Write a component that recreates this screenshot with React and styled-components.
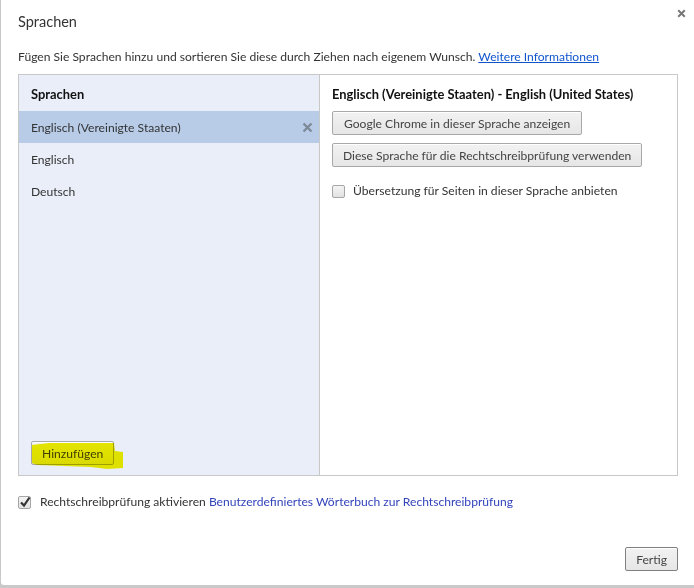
import React from "react";
import styled, { createGlobalStyle } from "styled-components";

const Global = createGlobalStyle`
  html, body { margin: 0; padding: 0; background: #c9c9c9; }
  body { width: 694px; height: 588px; overflow: hidden; font-family: Lato, "Noto Sans", sans-serif; font-size: 12.1px; color: #333; }
  #root { width: 694px; height: 588px; }
`;

const Dialog = styled.div`
  position: relative;
  box-sizing: border-box;
  width: 693px;
  height: 585px;
  margin-left: 1px;
  background: #fff;
  border-radius: 0 0 0 3px;
  padding: 13px 16px 0 17px;
  display: flex;
  flex-direction: column;
`;

const Title = styled.h1`
  margin: 0;
  font-size: 14.5px;
  line-height: 17px;
  font-weight: 400;
  color: #333;
`;

const Close = styled.svg`
  position: absolute;
  top: 9px;
  right: 8px;
  width: 9px;
  height: 9px;
`;

const Description = styled.p`
  margin: 19px 0 9px;
  line-height: 16px;
  white-space: nowrap;
`;

const Link = styled.a`
  color: ${(p) => (p.$plain ? "#3344bb" : "#1155cc")};
  text-decoration: ${(p) => (p.$plain ? "none" : "underline")};
`;

const Panel = styled.div`
  box-sizing: border-box;
  width: 660px;
  height: 402px;
  border: 1px solid #c8c8c8;
  display: grid;
  grid-template-columns: 301px 1fr;
`;

const LeftColumn = styled.div`
  box-sizing: border-box;
  background: #eaeef8;
  border-right: 1px solid #c8c8c8;
  display: flex;
  flex-direction: column;
  position: relative;
`;

const ColumnHeading = styled.div`
  font-weight: 700;
  font-size: 12.9px;
  color: #111;
  line-height: 16px;
  padding: 11px 12px 9px;
`;

const LanguageRow = styled.div`
  height: 32px;
  padding: 0 12px;
  display: flex;
  align-items: center;
  justify-content: space-between;
  background: ${(p) => (p.$selected ? "#b8cce8" : "transparent")};
`;

const RemoveIcon = styled.svg`
  width: 11px;
  height: 11px;
  margin-right: -6px;
`;

const Footer = styled.div`
  margin-top: auto;
  padding: 0 12px 10px;
  position: relative;
`;

const Button = styled.button`
  box-sizing: border-box;
  height: 24px;
  padding: 0 ${(p) => p.$pad}px;
  border: 1px solid ${(p) => (p.$dark ? "#808080" : "#a8a8a8")};
  border-radius: 2px;
  background: linear-gradient(#f2f2f2, #e6e6e6);
  box-shadow: inset 0 1px 0 #fff;
  font: inherit;
  color: #444;
  white-space: nowrap;
  display: block;
  position: relative;
`;

const Marker = styled.svg`
  position: absolute;
  left: 12px;
  top: 0;
  width: 96px;
  height: 30px;
  mix-blend-mode: multiply;
  pointer-events: none;
`;

const Detail = styled.div`
  padding: 0 12px;
  display: flex;
  flex-direction: column;
  align-items: flex-start;
`;

const DetailHeading = styled(ColumnHeading)`
  padding: 11px 0 9px;
  white-space: nowrap;
`;

const ButtonStack = styled.div`
  display: flex;
  flex-direction: column;
  align-items: flex-start;
  gap: 8px;
`;

const CheckRow = styled.label`
  display: flex;
  align-items: center;
  gap: ${(p) => p.$gap}px;
  line-height: 16px;
  white-space: nowrap;
  margin-top: ${(p) => p.$top}px;
`;

const Box = styled.span`
  box-sizing: border-box;
  width: 13px;
  height: 13px;
  border: 1px solid #a6a6a6;
  border-radius: 2px;
  background: linear-gradient(#f4f4f4, #e2e2e2);
  position: relative;
  flex: none;
`;

const Tick = styled.svg`
  position: absolute;
  left: 0;
  top: -1px;
  width: 12px;
  height: 12px;
`;

const Actions = styled.div`
  margin-top: auto;
  padding: 0 0 14px;
  display: flex;
  justify-content: flex-end;
`;

const Cross = ({ c, w }) => (
  <path d="M1.5 1.5 L9.5 9.5 M9.5 1.5 L1.5 9.5" stroke={c} strokeWidth={w} fill="none" />
);

export default function App() {
  return (
    <>
      <Global />
      <Dialog>
        <Title>Sprachen</Title>
        <Close viewBox="0 0 11 11"><Cross c="#777" w="2.4" /></Close>
        <Description>
          Fügen Sie Sprachen hinzu und sortieren Sie diese durch Ziehen nach eigenem Wunsch. <Link href="#">Weitere Informationen</Link>
        </Description>
        <Panel>
          <LeftColumn>
            <ColumnHeading>Sprachen</ColumnHeading>
            <LanguageRow $selected>
              Englisch (Vereinigte Staaten)
              <RemoveIcon viewBox="0 0 11 11"><Cross c="#7f8a99" w="2.4" /></RemoveIcon>
            </LanguageRow>
            <LanguageRow>Englisch</LanguageRow>
            <LanguageRow>Deutsch</LanguageRow>
            <Footer>
              <Button $pad={10}>Hinzufügen</Button>
              <Marker viewBox="0 0 96 30">
                <path d="M1 4 L18 2 L83 2 L84 10 L92 11 L92 27 L76 28 L60 26 L6 24 L1 22 Z" fill="#f2f200" />
              </Marker>
            </Footer>
          </LeftColumn>
          <Detail>
            <DetailHeading>Englisch (Vereinigte Staaten) - English (United States)</DetailHeading>
            <ButtonStack>
              <Button $pad={11}>Google Chrome in dieser Sprache anzeigen</Button>
              <Button $pad={10}>Diese Sprache für die Rechtschreibprüfung verwenden</Button>
            </ButtonStack>
            <CheckRow $top={16} $gap={8}>
              <Box />
              Übersetzung für Seiten in dieser Sprache anbieten
            </CheckRow>
          </Detail>
        </Panel>
        <CheckRow $top={18} $gap={9}>
          <Box>
            <Tick viewBox="0 0 12 12"><path d="M2 6.5 L5 9.5 L10.5 1.5" stroke="#333" strokeWidth="2.2" fill="none" /></Tick>
          </Box>
          <span>Rechtschreibprüfung aktivieren <Link href="#" $plain>Benutzerdefiniertes Wörterbuch zur Rechtschreibprüfung</Link></span>
        </CheckRow>
        <Actions>
          <Button $dark $pad={10}>Fertig</Button>
        </Actions>
      </Dialog>
    </>
  );
}
